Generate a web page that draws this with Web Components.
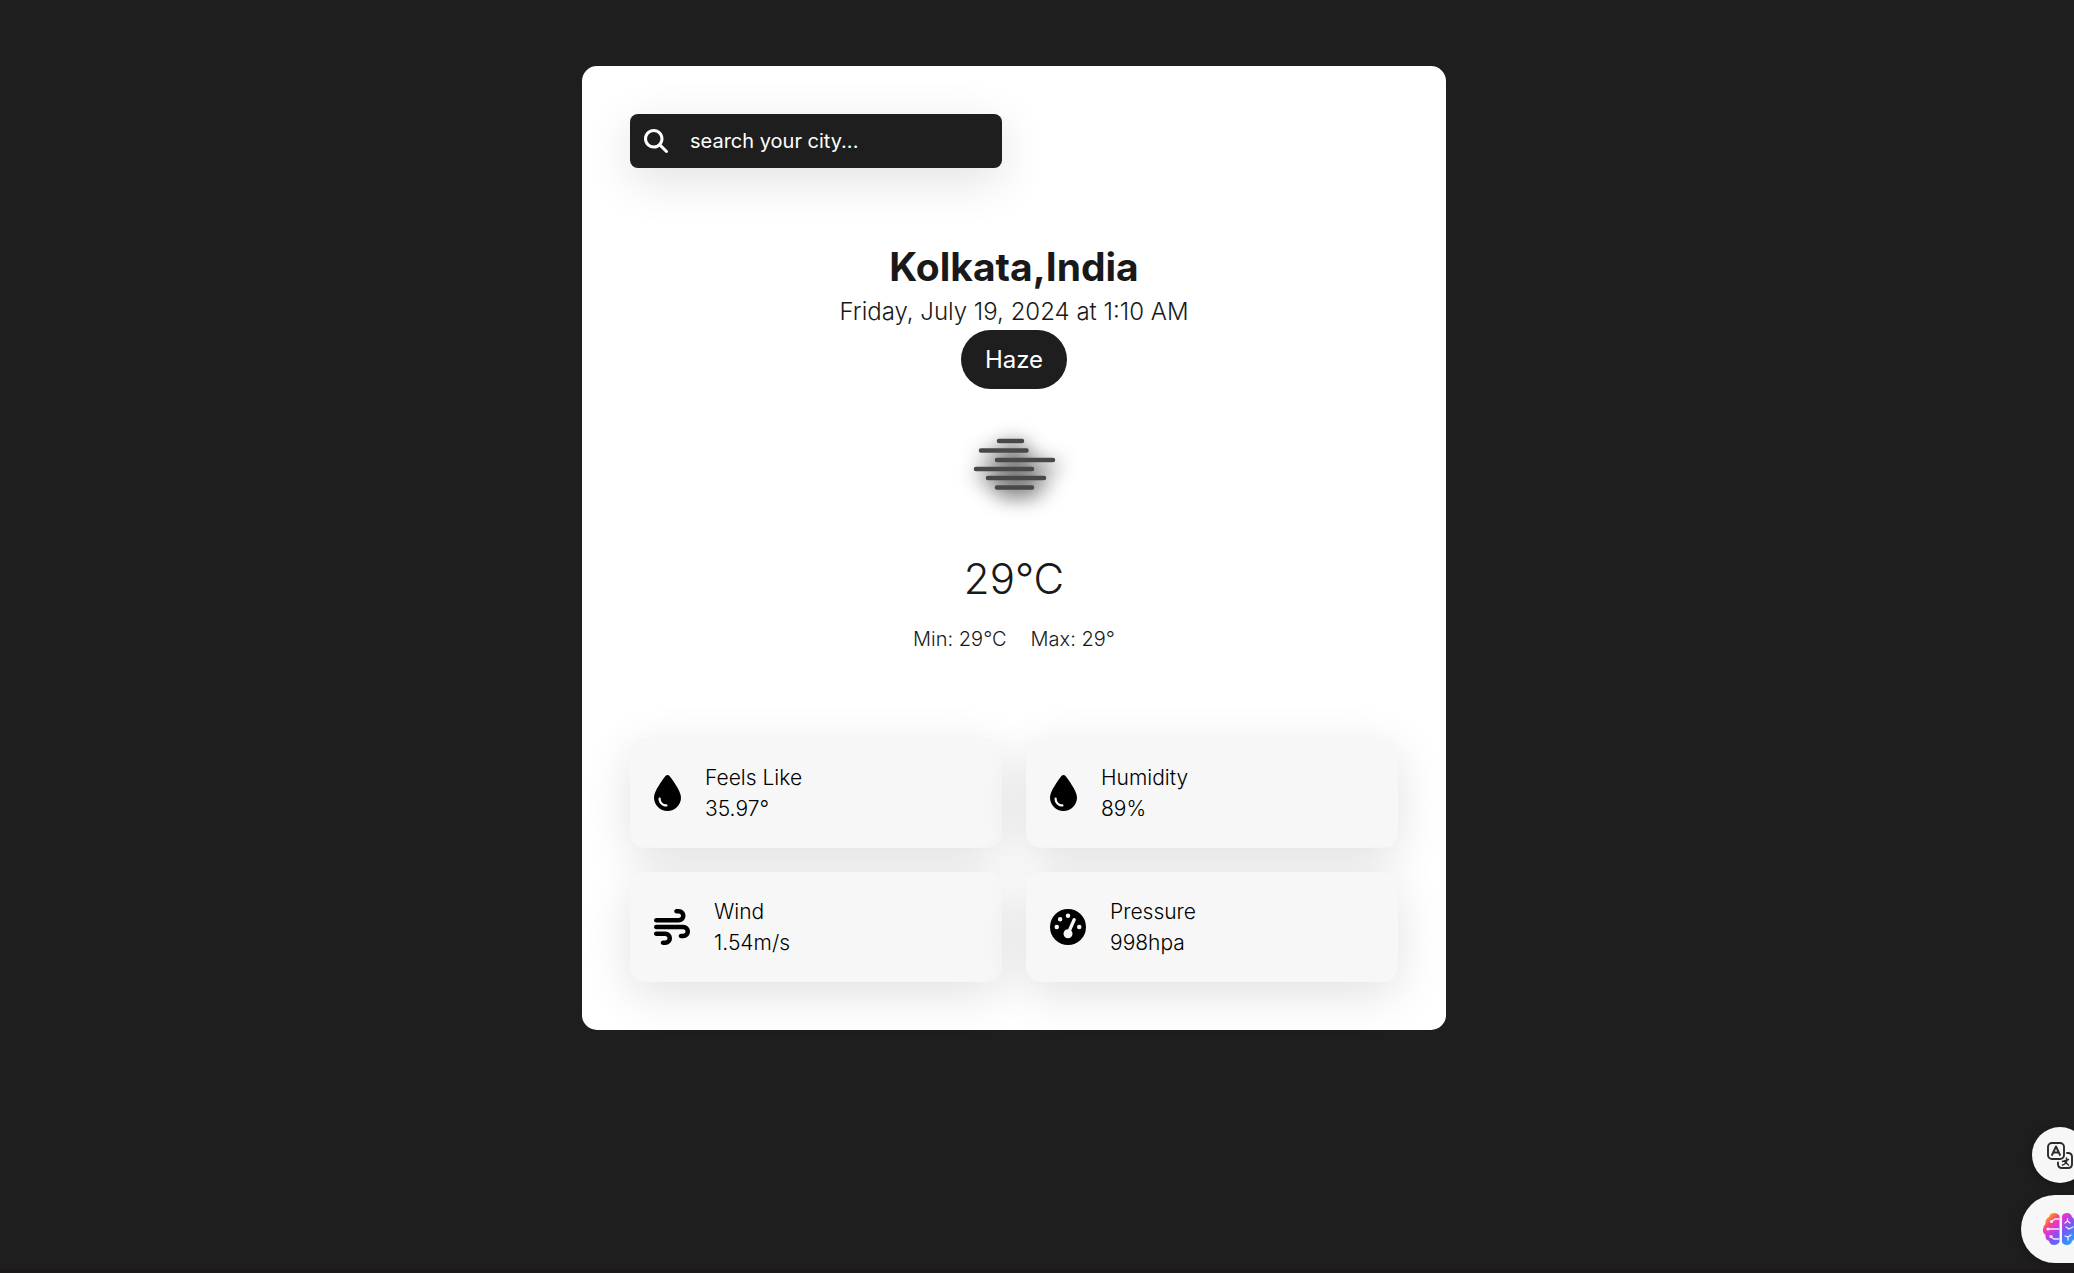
<!DOCTYPE html>
<html lang="en">
<head>
<meta charset="utf-8">
<meta name="viewport" content="width=device-width, initial-scale=1">
<title>Weather</title>
<style>
  body {
    --dark: #1e1e1e;
    --tile: #f7f7f7;
    --shadow: 0 12px 48px rgba(0, 0, 0, .12);
    margin: 0;
    min-height: 100vh;
    box-sizing: border-box;
    background: var(--dark);
    border-bottom: 4px solid #1a1818;
    color: #191919;
    font-family: Inter, "Open Sans", sans-serif;
    font-weight: 300;
    overflow: hidden;
  }
</style>
</head>
<body>
<weather-app></weather-app>
<floating-tools></floating-tools>

<script>
const define = (name, html, setup) => customElements.define(name, class extends HTMLElement {
  constructor() {
    super();
    const template = document.createElement('template');
    template.innerHTML = html;
    this.attachShadow({ mode: 'open' }).append(template.content.cloneNode(true));
    if (setup) setup(this);
  }
});

const icons = {
  drop: ['0 0 384 512', 'M192 512C86 512 0 426 0 320C0 228.800 130.200 57.700 166.600 11.700C172.600 4.200 181.500 0 191.100 0h1.800c9.600 0 18.500 4.200 24.500 11.700C253.800 57.700 384 228.800 384 320c0 106-86 192-192 192zM96 336c0-8.800-7.200-16-16-16s-16 7.200-16 16c0 61.900 50.100 112 112 112c8.800 0 16-7.200 16-16s-7.200-16-16-16c-44.200 0-80-35.800-80-80z'],
  wind: ['0 0 512 512', 'M288 32c0 17.700 14.300 32 32 32h32c17.700 0 32 14.300 32 32s-14.300 32-32 32H32c-17.700 0-32 14.300-32 32s14.300 32 32 32H352c53 0 96-43 96-96s-43-96-96-96H320c-17.700 0-32 14.300-32 32zm64 352c0 17.700 14.300 32 32 32h32c53 0 96-43 96-96s-43-96-96-96H32c-17.700 0-32 14.300-32 32s14.300 32 32 32H416c17.700 0 32 14.300 32 32s-14.300 32-32 32H384c-17.700 0-32 14.300-32 32zM128 512h32c53 0 96-43 96-96s-43-96-96-96H32c-17.700 0-32 14.300-32 32s14.300 32 32 32H160c17.700 0 32 14.300 32 32s-14.300 32-32 32H128c-17.700 0-32 14.300-32 32s14.300 32 32 32z'],
  gauge: ['0 0 512 512', 'M0 256a256 256 0 1 1 512 0A256 256 0 1 1 0 256zM288 96a32 32 0 1 0 -64 0 32 32 0 1 0 64 0zM256 416c35.300 0 64-28.700 64-64c0-17.400-6.900-33.100-18.100-44.600L366 161.700c5.300-12.100-.2-26.300-12.300-31.600s-26.300 .2-31.600 12.300L257.900 288c-.6 0-1.300 0-1.900 0c-35.300 0-64 28.700-64 64s28.700 64 64 64zM176 144a32 32 0 1 0 -64 0 32 32 0 1 0 64 0zM96 288a32 32 0 1 0 0-64 32 32 0 1 0 0 64zm352-32a32 32 0 1 0 -64 0 32 32 0 1 0 64 0z'],
};

define('city-search', `
  <style>
    :host { display: block; }
    label {
      display: flex; align-items: center; gap: 22px;
      height: 54px; box-sizing: border-box; padding: 0 14px;
      background: var(--dark); border-radius: 8px; box-shadow: var(--shadow);
    }
    svg { width: 24px; height: 24px; fill: #fff; flex: none; }
    input {
      flex: 1; min-width: 0; padding: 0; border: 0; outline: 0; background: none;
      color: #fff; font: 400 20px/30px Inter, sans-serif;
    }
    input::placeholder { color: #fff; opacity: 1; }
  </style>
  <label>
    <svg viewBox="0 0 512 512" aria-hidden="true"><path d="M416 208c0 45.900-14.900 88.300-40 122.700L502.600 457.400c12.500 12.500 12.500 32.800 0 45.300s-32.800 12.500-45.300 0L330.700 376c-34.400 25.200-76.800 40-122.700 40C93.100 416 0 322.900 0 208S93.100 0 208 0S416 93.100 416 208zM208 352a144 144 0 1 0 0-288 144 144 0 1 0 0 288z"/></svg>
    <input type="text" placeholder="search your city..." aria-label="search your city...">
  </label>`);

define('haze-icon', `
  <style>
    :host { display: block; }
    svg { display: block; width: 120px; height: 120px; overflow: visible; filter: drop-shadow(3px 6px 10px #000); }
  </style>
  <svg viewBox="0 0 120 120" fill="none" stroke="#484848" stroke-width="4.500" stroke-linecap="round" aria-hidden="true">
    <path d="M45 35H68M27 44.500H72.500M43 54H99M22 63H78M34 72H90M43 81.500H78"/>
  </svg>`);

define('weather-now', `
  <style>
    :host { display: flex; flex-direction: column; align-items: center; text-align: center; }
    h2 { margin: 0; font-size: 39px; line-height: 55px; font-weight: 700; }
    .date { font-size: 24px; line-height: 36px; }
    .state { padding: 12px 24px; border-radius: 30px; background: var(--dark); color: #fff; font-size: 24px; line-height: 35px; font-weight: 400; }
    haze-icon { margin-top: 17px; }
    .temp { margin-top: 22px; font-size: 42px; line-height: 62px; }
    .range { display: flex; gap: 24px; margin-top: 14px; font-size: 20px; line-height: 30px; }
  </style>
  <h2><slot name="city"></slot></h2>
  <div class="date"><slot name="date"></slot></div>
  <div class="state"><slot name="state"></slot></div>
  <haze-icon></haze-icon>
  <div class="temp"><slot name="temp"></slot></div>
  <div class="range"><slot name="min"></slot><slot name="max"></slot></div>`);

define('weather-tile', `
  <style>
    :host {
      display: flex; align-items: center; gap: 24px; padding: 24px;
      background: var(--tile); border-radius: 15px; box-shadow: var(--shadow);
      color: #000; font-size: 21px; line-height: 31px;
    }
    svg { display: block; height: 36px; }
  </style>
  <svg aria-hidden="true"><path/></svg>
  <div><div><slot name="label"></slot></div><div><slot></slot></div></div>`,
  el => {
    const [box, d] = icons[el.getAttribute('icon')];
    el.shadowRoot.querySelector('svg').setAttribute('viewBox', box);
    el.shadowRoot.querySelector('path').setAttribute('d', d);
  });

define('weather-app', `
  <style>
    :host { display: block; padding: 66px 46px 0 0; }
    main {
      max-width: 864px; margin: 0 auto; padding: 48px; box-sizing: border-box;
      background: #fff; border-radius: 15px;
    }
    .grid { display: grid; grid-template-columns: repeat(2, minmax(0, 1fr)); gap: 24px; }
    weather-now { margin: 71px 0 84px; }
  </style>
  <main>
    <div class="grid"><city-search></city-search></div>
    <weather-now>
      <span slot="city">Kolkata,India</span>
      <span slot="date">Friday, July 19, 2024 at 1:10 AM</span>
      <span slot="state">Haze</span>
      <span slot="temp">29°C</span>
      <span slot="min">Min: 29°C</span>
      <span slot="max">Max: 29°</span>
    </weather-now>
    <div class="grid">
      <weather-tile icon="drop"><span slot="label">Feels Like</span>35.97°</weather-tile>
      <weather-tile icon="drop"><span slot="label">Humidity</span>89%</weather-tile>
      <weather-tile icon="wind"><span slot="label">Wind</span>1.54m/s</weather-tile>
      <weather-tile icon="gauge"><span slot="label">Pressure</span>998hpa</weather-tile>
    </div>
  </main>`);

define('floating-tools', `
  <style>
    :host { position: fixed; right: 0; bottom: 10px; display: flex; flex-direction: column; align-items: flex-end; gap: 12px; }
    button { display: flex; align-items: center; padding: 0; border: 0; background: var(--tile); box-shadow: 0 2px 8px rgba(0, 0, 0, .3); }
    button svg { flex: none; }
    .translate { width: 56px; height: 56px; margin-right: -14px; padding-left: 14px; border-radius: 28px; }
    .brain { width: 53px; height: 68px; padding-left: 22px; border-radius: 34px 0 0 34px; overflow: hidden; }
  </style>
  <button class="translate" type="button" aria-label="Translate">
    <svg width="28" height="28" viewBox="0 0 28 28" fill="none" stroke="#2b2b2b" stroke-width="1.900" stroke-linecap="round" stroke-linejoin="round">
      <rect x="2" y="2" width="16" height="16" rx="4"/>
      <path d="M6 14L10 5.500L14 14M7.500 11.500H12.500"/>
      <path d="M21 12H22.500Q26 12.500 26 16V23Q26 27 22 27H16Q12 27 12 23V21.500"/>
      <path d="M16.500 20.500L22.500 18.500M16.500 24Q20.500 23 21 19M18 20L22.500 24M20.500 17V18" stroke-width="1.500"/>
    </svg>
  </button>
  <button class="brain" type="button" aria-label="Assistant">
    <svg width="34" height="34" viewBox="0 0 34 34">
      <defs><linearGradient id="g" x1="0" y1="0" x2="1" y2="1">
        <stop offset=".12" stop-color="#ffa800"/><stop offset=".26" stop-color="#f9487c"/><stop offset=".38" stop-color="#df37d2"/><stop offset=".58" stop-color="#7657f5"/><stop offset=".9" stop-color="#20a5ff"/>
      </linearGradient></defs>
      <path fill="url(#g)" d="M16.500 4V30Q15 33 11 33Q7 33 6 29Q2 28 2.500 23Q-1 20 0 17Q0 14 2.500 12Q2 7 6 5Q7 1 11 1Q15 1 16.500 4ZM19 4Q20 1 24 1Q28 1 29 5Q32 7 31.500 12Q34 13 34 17Q34 21 31.500 23Q32 28 29 29Q28 33 24 33Q20 33 19 30Z"/>
      <g fill="none" stroke="#f7e9ff" stroke-width="1.300" stroke-linecap="round">
        <path d="M16 7H12L9 9M5 17H16M8 25L11 27H16M22 11L24.500 9L27 11M24.500 9V7M23 15L26 17L30 15M22 24L25 25L28 23M25 25V28"/>
      </g>
      <g fill="#f7e9ff"><circle cx="8.500" cy="9.500" r="1.600"/><circle cx="5" cy="17" r="1.600"/><circle cx="8" cy="24.500" r="1.600"/></g>
    </svg>
  </button>`);
</script>
</body>
</html>
